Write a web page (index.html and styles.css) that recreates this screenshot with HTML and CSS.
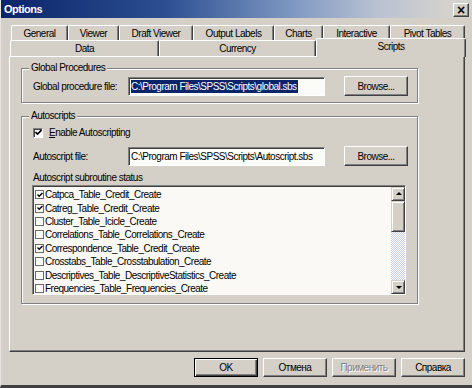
FILE: index.html
```html
<!DOCTYPE html>
<html lang="en">
<head>
	<meta charset="UTF-8" />
	<title>Options</title>
	<link rel="stylesheet" href="styles.css">
</head>
<body>
	<!-- 对话框 开始 -->
	<div class="window">
		<div class="titlebar">
			<span class="title">Options</span>
			<span class="close">&times;</span>
		</div>

		<!-- 选项卡 -->
		<div class="tabs">
			<div class="tab-row">
				<div class="tab t-general">General</div>
				<div class="tab t-viewer">Viewer</div>
				<div class="tab t-draft">Draft Viewer</div>
				<div class="tab t-output">Output Labels</div>
				<div class="tab t-charts">Charts</div>
				<div class="tab t-inter">Interactive</div>
				<div class="tab t-pivot">Pivot Tables</div>
			</div>
			<div class="tab-row">
				<div class="tab t-data">Data</div>
				<div class="tab t-currency">Currency</div>
				<div class="tab t-scripts active">Scripts</div>
			</div>
		</div>

		<div class="panel">
			<div class="group group-global">
				<span class="group-title">Global Procedures</span>
				<div class="file-row">
					<span class="field-label">Global procedure file:</span>
					<div class="input"><span class="selected">C:\Program Files\SPSS\Scripts\global.sbs</span></div>
					<div class="btn browse">Browse...</div>
				</div>
			</div>

			<div class="group group-auto">
				<span class="group-title">Autoscripts</span>
				<div class="check-row">
					<span class="checkbox"><svg width="7" height="7" viewBox="0 0 7 7"><path d="M0.5 3 L2.5 5 L6.5 1" fill="none" stroke="#000" stroke-width="1.6"/></svg></span>
					<span><u>E</u>nable Autoscripting</span>
				</div>
				<div class="file-row">
					<span class="field-label">Autoscript file:</span>
					<div class="input"><span>C:\Program Files\SPSS\Scripts\Autoscript.sbs</span></div>
					<div class="btn browse">Browse...</div>
				</div>
				<div class="list-label">Autoscript subroutine status</div>
				<div class="listbox">
					<ul class="items">
						<li><span class="checkbox small"><svg width="6" height="6" viewBox="0 0 6 6"><path d="M0.5 2.5 L2.2 4.3 L5.5 1" fill="none" stroke="#000" stroke-width="1.4"/></svg></span>Catpca_Table_Credit_Create</li>
						<li><span class="checkbox small"><svg width="6" height="6" viewBox="0 0 6 6"><path d="M0.5 2.5 L2.2 4.3 L5.5 1" fill="none" stroke="#000" stroke-width="1.4"/></svg></span>Catreg_Table_Credit_Create</li>
						<li><span class="checkbox small"></span>Cluster_Table_Icicle_Create</li>
						<li><span class="checkbox small"></span>Correlations_Table_Correlations_Create</li>
						<li><span class="checkbox small"><svg width="6" height="6" viewBox="0 0 6 6"><path d="M0.5 2.5 L2.2 4.3 L5.5 1" fill="none" stroke="#000" stroke-width="1.4"/></svg></span>Correspondence_Table_Credit_Create</li>
						<li><span class="checkbox small"></span>Crosstabs_Table_Crosstabulation_Create</li>
						<li><span class="checkbox small"></span>Descriptives_Table_DescriptiveStatistics_Create</li>
						<li><span class="checkbox small"></span>Frequencies_Table_Frequencies_Create</li>
					</ul>
					<div class="scrollbar">
						<div class="sb-btn up"></div>
						<div class="sb-thumb"></div>
						<div class="sb-track"></div>
						<div class="sb-btn down"></div>
					</div>
				</div>
			</div>
		</div>

		<!-- 底部按钮 -->
		<div class="buttons">
			<div class="btn default">OK</div>
			<div class="btn">Отмена</div>
			<div class="btn disabled">Применить</div>
			<div class="btn">Справка</div>
		</div>
	</div>
	<!-- 对话框 结束 -->
</body>
</html>
```

FILE: styles.css
```css
*{
	margin:0;
	padding:0;
	box-sizing:border-box;
}
li{
	list-style:none;
}
body{
	background:#d4d0c8;
	font-family:"Liberation Sans",Arial,sans-serif;
	font-size:10px;
	letter-spacing:-0.5px;
	color:#000;
}
.window{
	width:472px;
	height:388px;
	background:#d4d0c8;
	border-left:1px solid #e8e6e0;
	border-bottom:3px solid #404040;
	overflow:hidden;
}

/* 标题栏 */
.titlebar{
	display:flex;
	align-items:center;
	justify-content:space-between;
	height:18px;
	padding:0 3px 0 3px;
	background:linear-gradient(to right,#0a246a 0%,#2d4f92 35%,#7f98c2 62%,#b9c2d2 80%,#d4d2cc 95%);
}
.titlebar .title{
	color:#fff;
	font-weight:bold;
	font-size:11px;
	letter-spacing:-0.5px;
}
.titlebar .close{
	display:flex;
	align-items:center;
	justify-content:center;
	width:16px;
	height:14px;
	margin-top:1px;
	background:#d4d0c8;
	border-top:1px solid #fff;
	border-left:1px solid #fff;
	border-right:1px solid #404040;
	border-bottom:1px solid #404040;
	box-shadow:inset -1px -1px 0 #808080;
	font-size:14px;
	font-weight:bold;
	line-height:12px;
	letter-spacing:0;
}

/* 选项卡 */
.tabs{
	margin-top:7px;
	padding-left:9px;
}
.tab-row{
	display:flex;
}
.tab{
	display:flex;
	align-items:center;
	justify-content:center;
	height:15px;
	border-top:1px solid #fff;
	border-left:1px solid #fff;
	border-right:1px solid #404040;
	border-top-left-radius:2px;
	border-top-right-radius:2px;
	box-shadow:inset -1px 0 0 #808080;
	padding-top:1px;
}
.tab-row + .tab-row .tab{
	height:16px;
	padding-top:0;
}
.t-general{width:57px;margin-left:1px;}
.t-viewer{width:51px;}
.t-draft{width:74px;}
.t-output{width:81px;}
.t-charts{width:49px;}
.t-inter{width:67px;}
.t-pivot{width:75px;}
.t-data{width:149px;}
.t-currency{width:157px;}
.tab-row + .tab-row .t-scripts{
	position:relative;
	width:150px;
	height:19px;
	margin-top:-2px;
	margin-bottom:-1px;
	padding-bottom:4px;
	background:#d4d0c8;
	z-index:1;
}

/* 面板 */
.panel{
	width:456px;
	height:296px;
	margin-left:8px;
	padding:11px 0 0 11px;
	border-top:1px solid #fff;
	border-left:1px solid #fff;
	border-right:1px solid #404040;
	border-bottom:1px solid #404040;
	box-shadow:inset -1px -1px 0 #808080;
}
.group{
	position:relative;
	width:397px;
	border:1px solid #808080;
	box-shadow:inset 1px 1px 0 #fff,1px 1px 0 #fff;
	padding:0 9px 0 11px;
}
.group-title{
	position:absolute;
	top:-7px;
	left:7px;
	padding:0 2px;
	line-height:12px;
	background:#d4d0c8;
}
.group-global{
	height:35px;
	padding-top:7px;
}
.group-auto{
	height:188px;
	margin-top:13px;
	padding-top:9px;
}
.file-row{
	display:flex;
	align-items:center;
	height:20px;
}
.field-label{
	width:95px;
}
.input{
	width:197px;
	height:19px;
	padding:2px 0 0 2px;
	background:#fbfbf8;
	border-top:1px solid #808080;
	border-left:1px solid #808080;
	border-right:1px solid #fff;
	border-bottom:1px solid #fff;
	box-shadow:inset 1px 1px 0 #404040;
	white-space:nowrap;
	overflow:hidden;
	line-height:13px;
}
.input .selected{
	display:inline-block;
	background:#0a246a;
	color:#fff;
	padding-right:1px;
}
.btn{
	display:flex;
	align-items:center;
	justify-content:center;
	width:64px;
	height:20px;
	background:#d4d0c8;
	border-top:1px solid #fff;
	border-left:1px solid #fff;
	border-right:1px solid #404040;
	border-bottom:1px solid #404040;
	box-shadow:inset -1px -1px 0 #808080;
}
.browse{
	margin-left:auto;
}

.check-row{
	display:flex;
	align-items:center;
	height:13px;
}
.checkbox{
	display:flex;
	align-items:center;
	justify-content:center;
	width:10px;
	height:10px;
	margin-right:6px;
	background:#fbfbf8;
	border-top:1px solid #808080;
	border-left:1px solid #808080;
	border-right:1px solid #fff;
	border-bottom:1px solid #fff;
	box-shadow:inset 1px 1px 0 #404040;
}
.check-row + .file-row{
	margin-top:7px;
}
.list-label{
	margin-top:5px;
	line-height:13px;
}

/* 列表框 */
.listbox{
	display:flex;
	width:374px;
	height:110px;
	margin-top:1px;
	margin-left:-1px;
	background:#faf9f5;
	border-top:1px solid #808080;
	border-left:1px solid #808080;
	border-right:1px solid #fff;
	border-bottom:1px solid #fff;
	box-shadow:inset 1px 1px 0 #404040;
}
.items{
	flex:1;
	padding:2px 0 0 2px;
	overflow:hidden;
	white-space:nowrap;
}
.items li{
	display:flex;
	align-items:center;
	height:13.4px;
}
.checkbox.small{
	width:9px;
	height:9px;
	margin-right:1px;
	border-color:#6a6a6a;
	border-right-color:#6a6a6a;
	border-bottom-color:#6a6a6a;
	box-shadow:none;
}
.scrollbar{
	display:flex;
	flex-direction:column;
	width:14px;
	padding-top:1px;
}
.sb-btn,
.sb-thumb{
	background:#d4d0c8;
	border-top:1px solid #d4d0c8;
	border-left:1px solid #d4d0c8;
	border-right:1px solid #404040;
	border-bottom:1px solid #404040;
	box-shadow:inset 1px 1px 0 #fff,inset -1px -1px 0 #808080;
}
.sb-btn{
	position:relative;
	height:14px;
}
.sb-btn::after{
	content:"";
	position:absolute;
	left:4px;
	border-left:3px solid transparent;
	border-right:3px solid transparent;
}
.sb-btn.up::after{
	top:4px;
	border-bottom:3px solid #000;
}
.sb-btn.down::after{
	top:5px;
	border-top:3px solid #000;
}
.sb-thumb{
	height:31px;
}
.sb-track{
	flex:1;
	background:repeating-conic-gradient(#fbfbfb 0 25%,#c6d0de 0 50%) 0 0/2px 2px;
}

/* 底部按钮 */
.buttons{
	display:flex;
	justify-content:flex-end;
	gap:5px;
	margin-top:6px;
	padding-right:7px;
}
.buttons .btn{
	height:19px;
}
.btn.default{
	border:1px solid #000;
	box-shadow:inset 1px 1px 0 #fff,inset -1px -1px 0 #404040,inset -2px -2px 0 #808080;
}
.btn.disabled{
	color:#808080;
	text-shadow:1px 1px 0 #fff;
}
```
